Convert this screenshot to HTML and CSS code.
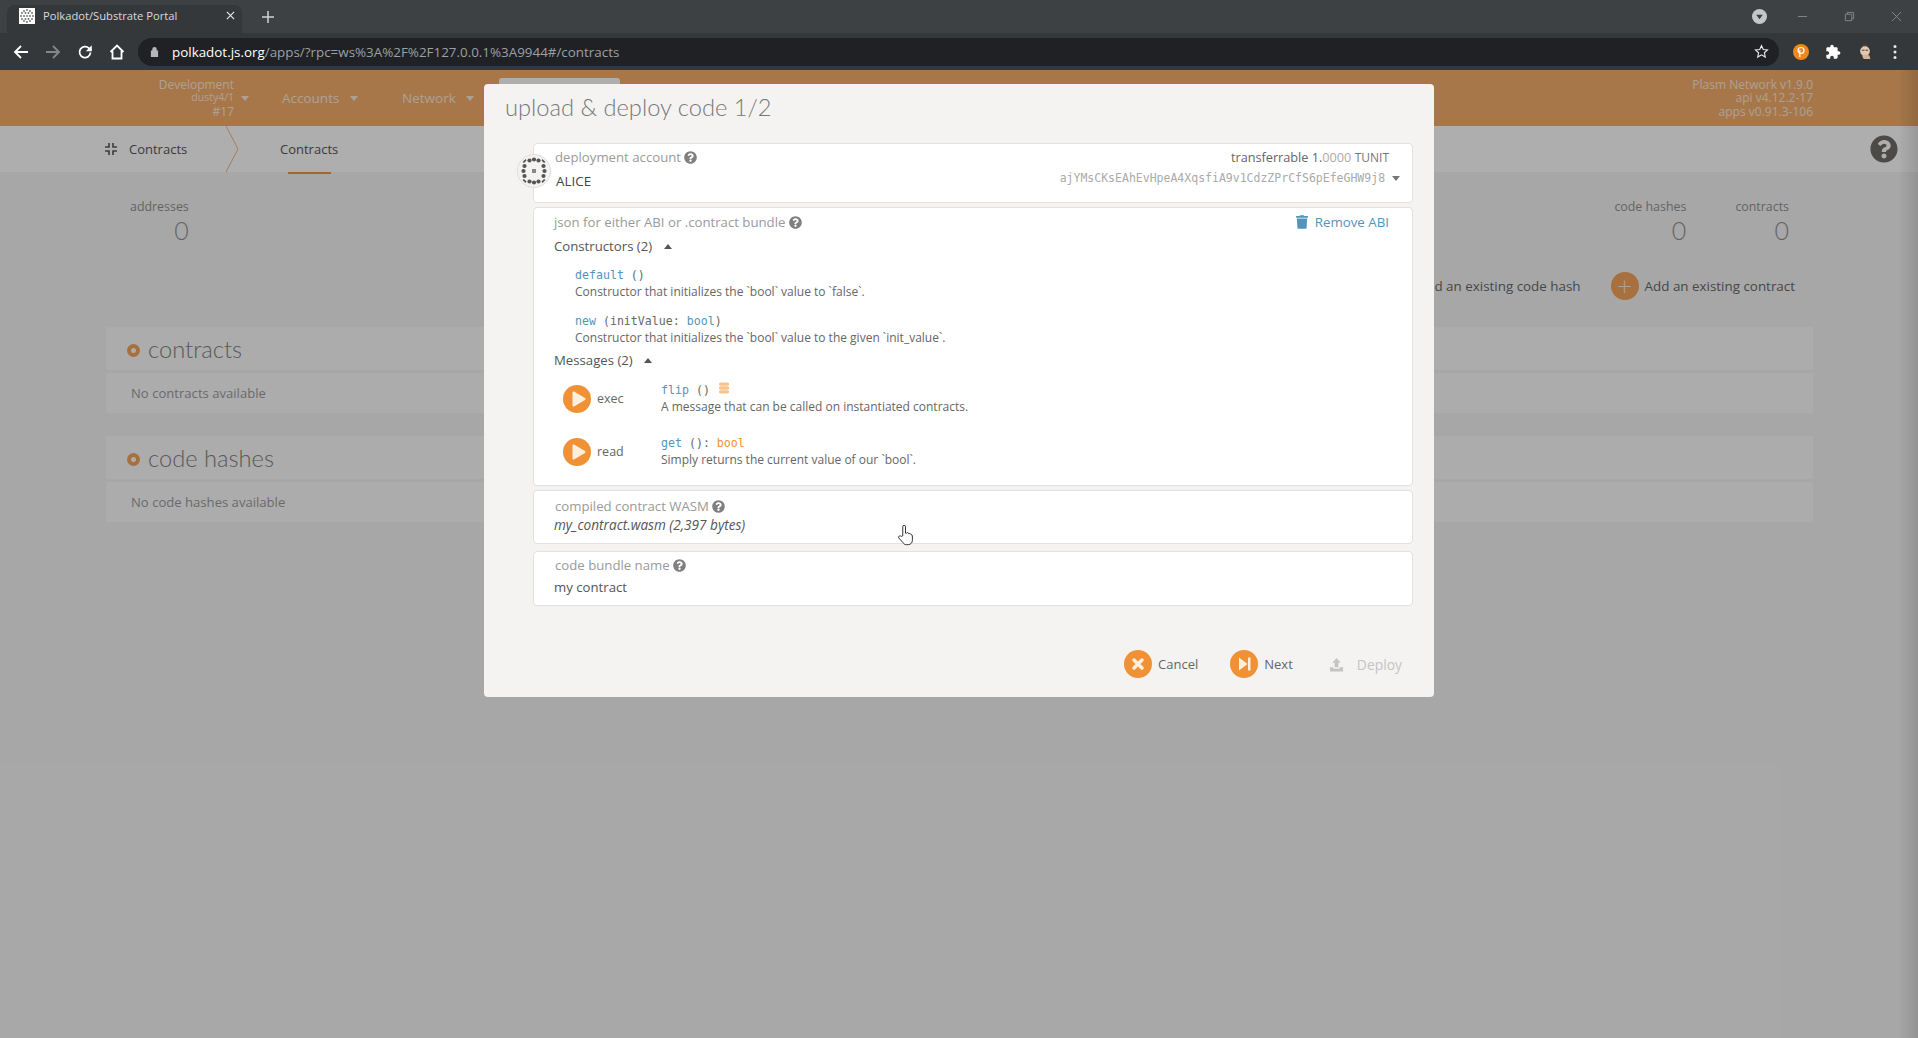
FILE: index.html
```html
<!DOCTYPE html>
<html lang="en">
<head>
    <meta charset="UTF-8">
    <title>Polkadot/Substrate Portal</title>
    <link rel="stylesheet" href="styles.css">
</head>
<body>
<svg class="defs" width="0" height="0">
    <symbol id="help" viewBox="0 0 512 512"><path d="M504 256c0 136.997-111.043 248-248 248S8 392.997 8 256C8 119.083 119.043 8 256 8s248 111.083 248 248zM262.655 90c-54.497 0-89.255 22.957-116.549 63.758-3.536 5.286-2.353 12.415 2.715 16.258l34.699 26.31c5.205 3.947 12.621 3.008 16.665-2.122 17.864-22.658 30.113-35.797 57.303-35.797 20.429 0 45.698 13.148 45.698 32.958 0 14.976-12.363 22.667-32.534 33.976C247.128 238.528 216 254.941 216 296v4c0 6.627 5.373 12 12 12h56c6.627 0 12-5.373 12-12v-1.333c0-28.462 83.186-29.647 83.186-106.667 0-58.002-60.165-102-116.531-102zM256 338c-25.365 0-46 20.635-46 46 0 25.364 20.635 46 46 46s46-20.636 46-46c0-25.365-20.635-46-46-46z"/></symbol>
    <symbol id="play" viewBox="0 0 28 28"><path d="M9.5 7.5a1 1 0 0 1 1.5-.9l11 6.5a1 1 0 0 1 0 1.8l-11 6.5a1 1 0 0 1-1.500-.9z"/></symbol>
</svg>

<!-- browser -->
<div class="tabstrip">
    <div class="tab">
        <svg class="favicon" viewBox="0 0 16 16">
            <rect width="16" height="16" fill="#fff"/>
            <g fill="#666">
                <circle cx="5" cy="3" r=".9"/><circle cx="8" cy="2" r=".9"/><circle cx="11" cy="3" r=".9"/>
                <circle cx="3" cy="5" r=".9"/><circle cx="6.500" cy="5" r=".9"/><circle cx="9.500" cy="5" r=".9"/><circle cx="13" cy="5" r=".9"/>
                <circle cx="2" cy="8" r=".9"/><circle cx="5" cy="8" r=".9"/><circle cx="8" cy="8" r=".9"/><circle cx="11" cy="8" r=".9"/><circle cx="14" cy="8" r=".9"/>
                <circle cx="3" cy="11" r=".9"/><circle cx="6.500" cy="11" r=".9"/><circle cx="9.500" cy="11" r=".9"/><circle cx="13" cy="11" r=".9"/>
                <circle cx="5" cy="13" r=".9"/><circle cx="8" cy="14" r=".9"/><circle cx="11" cy="13" r=".9"/>
            </g>
        </svg>
        <span class="tab-title">Polkadot/Substrate Portal</span>
        <svg class="tab-close" viewBox="0 0 10 10"><path d="M1 1l8 8M9 1l-8 8"/></svg>
    </div>
    <svg class="tab-new" viewBox="0 0 12 12"><path d="M6 0v12M0 6h12"/></svg>
    <div class="window-controls">
        <svg class="tab-search" viewBox="0 0 16 16"><circle cx="8" cy="8" r="8" fill="#c4c7c9"/><path d="M4.500 6h7L8 11z" fill="#3b3f42"/></svg>
        <svg class="win" viewBox="0 0 12 12"><path d="M1 6h10"/></svg>
        <svg class="win" viewBox="0 0 12 12"><path d="M1.500 3.500h7v7h-7zM3.500 3.500v-2h7v7h-2"/></svg>
        <svg class="win" viewBox="0 0 12 12"><path d="M1 1l10 10M11 1L1 11"/></svg>
    </div>
</div>
<div class="toolbar">
    <svg class="tool" viewBox="0 0 16 16"><path d="M15 8H2M8 2L2 8l6 6"/></svg>
    <svg class="tool tool-off" viewBox="0 0 16 16"><path d="M1 8h13M8 2l6 6-6 6"/></svg>
    <svg class="tool" viewBox="0 0 16 16"><path d="M13.500 8.500a5.500 5.500 0 1 1-1.600-4.300L14 6"/><path class="tool-fill" d="M14.800 1.200v6h-6z"/></svg>
    <svg class="tool" viewBox="0 0 16 16"><path d="M1.500 8L8 1.500 14.500 8M3.500 7v7.500h9V7"/></svg>
    <div class="urlbar">
        <svg class="lock" viewBox="0 0 10 12"><path d="M2.500 5V3.500a2.500 2.500 0 0 1 5 0V5H9v7H1V5z"/></svg>
        <span class="url"><b>polkadot.js.org</b>/apps/?rpc=ws%3A%2F%2F127.0.0.1%3A9944#/contracts</span>
        <svg class="star" viewBox="0 0 16 16"><path d="M8 1.800l1.900 4.100 4.500.5-3.300 3 .9 4.500L8 11.600l-4 2.300.9-4.500-3.300-3 4.500-.5z"/></svg>
    </div>
    <div class="ext-icons">
        <svg class="ext" viewBox="0 0 16 16"><circle cx="8" cy="8" r="8" fill="#f0871f"/><circle cx="8" cy="6.500" r="3" fill="none" stroke="#fff" stroke-width="1.200"/><path d="M6.800 6v7" stroke="#fff" stroke-width="1.200"/></svg>
        <svg class="ext" viewBox="0 0 24 24"><path fill="#fff" d="M20.500 11H19V7c0-1.100-.9-2-2-2h-4V3.500C13 2.120 11.880 1 10.500 1S8 2.120 8 3.500V5H4c-1.100 0-1.990.9-1.990 2v3.800H3.500c1.490 0 2.700 1.210 2.700 2.700s-1.210 2.700-2.700 2.700H2V20c0 1.100.9 2 2 2h3.800v-1.500c0-1.490 1.210-2.700 2.700-2.700 1.490 0 2.700 1.210 2.700 2.700V22H17c1.100 0 2-.9 2-2v-4h1.500c1.380 0 2.500-1.120 2.500-2.500S21.880 11 20.500 11z"/></svg>
        <svg class="ext" viewBox="0 0 16 18"><ellipse cx="8" cy="3" rx="3.500" ry="3" fill="#4a4038"/><ellipse cx="8" cy="8" rx="5.500" ry="5.500" fill="#e3c9b0"/><path d="M4.500 7h3M8.500 7h3" stroke="#333"/><path d="M5 12c0 3 1 5 3 5h6l-1-4-3-1z" fill="#d9b28f"/></svg>
        <svg class="ext ext-menu" viewBox="0 0 4 16"><circle cx="2" cy="2.500" r="1.500"/><circle cx="2" cy="8" r="1.500"/><circle cx="2" cy="13.500" r="1.500"/></svg>
    </div>
</div>

<!-- page behind the dialog -->
<div class="page">
    <header class="topnav">
        <div class="chain">
            <div class="chain-name">Development</div>
            <div class="chain-runtime">dusty4/1</div>
            <div class="chain-block">#17</div>
        </div>
        <i class="caret caret-chain"></i>
        <div class="nav-item">Accounts <i class="caret"></i></div>
        <div class="nav-item">Network <i class="caret"></i></div>
        <div class="versions">
            <div>Plasm Network v1.9.0</div>
            <div>api v4.12.2-17</div>
            <div>apps v0.91.3-106</div>
        </div>
    </header>
    <nav class="subnav">
        <svg class="subnav-icon" viewBox="0 0 12 12"><path d="M4 0v4H0M8 0v4h4M4 12V8H0M8 12V8h4"/></svg>
        <span class="subnav-title">Contracts</span>
        <svg class="subnav-chevron" viewBox="0 0 12 46"><path d="M0 0l12 23L0 46"/></svg>
        <span class="subnav-tab">Contracts</span>
        <svg class="subnav-help"><use href="#help"/></svg>
    </nav>
    <main class="content">
        <div class="summary">
            <div class="stat">
                <div class="stat-label">addresses</div>
                <div class="stat-value">0</div>
            </div>
            <div class="stat stat-right">
                <div class="stat-label">code hashes</div>
                <div class="stat-value">0</div>
            </div>
            <div class="stat">
                <div class="stat-label">contracts</div>
                <div class="stat-value">0</div>
            </div>
        </div>
        <div class="actions">
            <span class="action"><span class="action-plus">+</span>Add an existing code hash</span>
            <span class="action"><span class="action-plus">+</span>Add an existing contract</span>
        </div>
        <section class="panel">
            <h2 class="panel-head"><i class="panel-dot"></i>contracts</h2>
            <div class="panel-body">No contracts available</div>
        </section>
        <section class="panel">
            <h2 class="panel-head"><i class="panel-dot"></i>code hashes</h2>
            <div class="panel-body">No code hashes available</div>
        </section>
    </main>
    <div class="dimmer"></div>
    <div class="edge-shade"></div>
    <div class="tab-behind"></div>

    <!-- dialog -->
    <div class="modal">
        <h1 class="modal-title">upload &amp; deploy code 1/2</h1>

        <div class="card card-account">
            <svg class="identicon" viewBox="0 0 34 34">
                <circle cx="17" cy="17" r="16.500" fill="#f4f3f2" stroke="#ddd"/>
                <g fill="#555">
                    <circle cx="12.500" cy="6.500" r="2.100"/><circle cx="17" cy="5.500" r="2.100"/><circle cx="21.500" cy="6.500" r="2.100"/>
                    <circle cx="7.500" cy="12" r="2.100"/><circle cx="26.500" cy="12" r="2.100"/><circle cx="6.500" cy="17" r="2.100"/><circle cx="27.500" cy="17" r="2.100"/>
                    <circle cx="7.500" cy="22" r="2.100"/><circle cx="26.500" cy="22" r="2.100"/>
                    <circle cx="12.500" cy="27.500" r="2.100"/><circle cx="17" cy="28.500" r="2.100"/><circle cx="21.500" cy="27.500" r="2.100"/>
                    <path d="M5.500 8l3-3 1 1.500-2.500 2.500zM28.500 8l-3-3-1 1.500 2.500 2.500zM5.500 26l3 3 1-1.500-2.500-2.500zM28.500 26l-3 3-1-1.500 2.500-2.500z"/>
                    <rect x="15" y="15" width="4" height="4" fill="#888"/>
                </g>
            </svg>
            <div class="account-left">
                <div class="label">deployment account <svg class="help"><use href="#help"/></svg></div>
                <div class="account-name">ALICE</div>
            </div>
            <div class="account-right">
                <div class="balance">transferrable 1.<span class="balance-dec">0000</span> <span class="balance-unit">TUNIT</span></div>
                <div class="address">ajYMsCKsEAhEvHpeA4XqsfiA9v1CdzZPrCfS6pEfeGHW9j8 <i class="caret caret-dark"></i></div>
            </div>
        </div>

        <div class="card card-abi">
            <div class="abi-head">
                <div class="label">json for either ABI or .contract bundle <svg class="help"><use href="#help"/></svg></div>
                <div class="remove-abi">
                    <svg class="trash" viewBox="0 0 448 512"><path d="M432 32H312l-9.400-18.700A24 24 0 0 0 281.100 0H166.800a23.720 23.720 0 0 0-21.400 13.300L136 32H16A16 16 0 0 0 0 48v32a16 16 0 0 0 16 16h416a16 16 0 0 0 16-16V48a16 16 0 0 0-16-16zM53.200 467a48 48 0 0 0 47.900 45h245.800a48 48 0 0 0 47.900-45L416 128H32z"/></svg>
                    Remove ABI
                </div>
            </div>
            <div class="abi-group">Constructors (2) <i class="caret-up"></i></div>
            <div class="ctor">
                <div class="sig"><span class="sig-name">default</span> ()</div>
                <div class="doc">Constructor that initializes the `bool` value to `false`.</div>
            </div>
            <div class="ctor">
                <div class="sig"><span class="sig-name">new</span> (initValue: <span class="sig-name">bool</span>)</div>
                <div class="doc">Constructor that initializes the `bool` value to the given `init_value`.</div>
            </div>
            <div class="abi-group abi-group-msg">Messages (2) <i class="caret-up"></i></div>
            <div class="message">
                <div class="message-btn"><span class="round-btn"><svg class="round-icon"><use href="#play"/></svg></span>exec</div>
                <div>
                    <div class="sig"><span class="sig-name">flip</span> ()
                        <svg class="db" viewBox="0 0 12 12"><rect y="0" width="11" height="3.600" rx="1.600"/><rect y="4.200" width="11" height="3.600" rx="1.600"/><rect y="8.400" width="11" height="3.600" rx="1.600"/></svg>
                    </div>
                    <div class="doc">A message that can be called on instantiated contracts.</div>
                </div>
            </div>
            <div class="message">
                <div class="message-btn"><span class="round-btn"><svg class="round-icon"><use href="#play"/></svg></span>read</div>
                <div>
                    <div class="sig"><span class="sig-name">get</span> (): <span class="sig-ret">bool</span></div>
                    <div class="doc">Simply returns the current value of our `bool`.</div>
                </div>
            </div>
        </div>

        <div class="card card-file">
            <div class="label">compiled contract WASM <svg class="help"><use href="#help"/></svg></div>
            <div class="file-name">my_contract.wasm (2,397 bytes)</div>
        </div>

        <div class="card card-name">
            <div class="label">code bundle name <svg class="help"><use href="#help"/></svg></div>
            <div class="bundle-name">my contract</div>
        </div>

        <div class="modal-actions">
            <span class="btn btn-cancel"><span class="round-btn"><svg class="round-icon" viewBox="0 0 28 28"><path class="x-stroke" d="M10 10l8 8M18 10l-8 8"/></svg></span>Cancel</span>
            <span class="btn"><span class="round-btn"><svg class="round-icon" viewBox="0 0 28 28"><path d="M9 7.500l8.500 6.500L9 20.500zM18 7.500h2.500v13H18z"/></svg></span>Next</span>
            <span class="btn btn-off"><svg class="upload" viewBox="0 0 16 16"><path d="M8 1l4.500 5H10v5H6V6H3.500zM1 11h3.500v1.500h7V11H15v4.500H1z"/></svg>Deploy</span>
        </div>
    </div>

    <svg class="cursor" viewBox="0 0 18 24"><path d="M6 13V3a1.500 1.500 0 0 1 3 0v7l1 .2a1.300 1.300 0 0 1 2.500.3l.2.400a1.300 1.300 0 0 1 2.300.6c.6 0 1.500.5 1.500 1.500v5c0 2.500-2 4.500-4.500 4.500H10c-2 0-3-1-4-2.500L1.500 15c-.7-1.500 1.500-3 3-1.500z"/></svg>
</div>
</body>
</html>
```

FILE: styles.css
```css
*{
    margin:0;
    padding:0;
    box-sizing:border-box;
}
html,body{
    height:100%;
    overflow:hidden;
}
body{
    display:flex;
    flex-direction:column;
    font-family:"Open Sans","Noto Sans",sans-serif;
    font-size:12.5px;
    color:#555;
}
.defs{
    display:block;
    height:0;
}
i{
    display:inline-block;
}

/* browser */
.tabstrip{
    display:flex;
    align-items:center;
    height:33px;
    flex:none;
    background:#3d4144;
}
.tab{
    display:flex;
    align-items:center;
    align-self:flex-end;
    width:235px;
    height:28px;
    margin-left:7px;
    padding:0 0 7px 12px;
    border-radius:8px 8px 0 0;
    background:#35383b;
}
.favicon{
    width:16px;
    height:16px;
}
.tab-title{
    flex:1;
    margin-left:8px;
    font-size:11.2px;
    color:#d8dadb;
    white-space:nowrap;
}
.tab-close{
    width:9px;
    height:9px;
    margin-right:7px;
    fill:none;
    stroke:#e0e0e0;
    stroke-width:1.4;
}
.tab-new{
    width:12px;
    height:12px;
    margin-left:20px;
    fill:none;
    stroke:#d0d2d3;
    stroke-width:1.5;
}
.window-controls{
    display:flex;
    align-items:center;
    margin-left:auto;
}
.tab-search{
    width:15px;
    height:15px;
    margin-right:30px;
}
.win{
    width:11px;
    height:11px;
    margin-right:36px;
    fill:none;
    stroke:#85888a;
    stroke-width:1;
}
.win:last-child{
    margin-right:16px;
}
.toolbar{
    display:flex;
    align-items:center;
    height:37px;
    flex:none;
    padding:0 0 0 13px;
    background:#35383b;
}
.tool{
    width:16px;
    height:16px;
    margin-right:16px;
    fill:none;
    stroke:#fff;
    stroke-width:1.8;
}
.tool-fill{
    fill:#fff;
    stroke:none;
}
.tool-off{
    stroke:#85888a;
}
.urlbar{
    display:flex;
    align-items:center;
    width:1641px;
    height:28px;
    margin-left:-3px;
    padding:0 10px 0 12px;
    border-radius:14px;
    background:#202124;
}
.lock{
    width:9px;
    height:11px;
    fill:#b4b6b8;
}
.url{
    flex:1;
    margin-left:13px;
    font-size:13.4px;
    color:#9aa0a6;
}
.url b{
    font-weight:400;
    color:#fff;
}
.star{
    width:15px;
    height:15px;
    fill:none;
    stroke:#e8eaed;
    stroke-width:1.2;
}
.ext-icons{
    display:flex;
    align-items:center;
    margin-left:14px;
    gap:16px;
}
.ext{
    width:16px;
    height:16px;
}
.ext-menu{
    width:4px;
    margin-left:4px;
    fill:#e8eaed;
}

/* page */
.page{
    position:relative;
    flex:1;
    overflow:hidden;
    background:#f0f0f0;
}
.topnav{
    display:flex;
    align-items:center;
    height:56px;
    padding-left:101px;
    background:#f0ab6b;
    color:#f6e6d6;
    font-size:13.5px;
}
.chain{
    width:133px;
    text-align:right;
    font-size:12px;
    line-height:13.5px;
}
.chain-runtime{
    font-size:10.5px;
}
.caret{
    width:0;
    height:0;
    margin-left:7px;
    border:4.500px solid transparent;
    border-bottom:0;
    border-top:5px solid #f6e6d6;
    vertical-align:2px;
}
.caret-chain{
    margin-left:7px;
}
.caret-dark{
    margin-left:0;
    border-top-color:#777;
    vertical-align:1px;
}
.nav-item{
    width:120px;
    margin-left:33px;
    white-space:nowrap;
}
.nav-item + .nav-item{
    margin-left:0;
}
.versions{
    margin-left:auto;
    margin-right:105px;
    text-align:right;
    font-size:12px;
    line-height:13.500px;
}
.subnav{
    display:flex;
    align-items:center;
    height:46px;
    padding-left:105px;
    background:#f9f9f9;
    color:#555;
    font-size:13px;
}
.subnav-icon{
    width:12px;
    height:12px;
    margin-right:12px;
    fill:none;
    stroke:#555;
    stroke-width:1.6;
}
.subnav-title{
    width:97px;
}
.subnav-chevron{
    width:12px;
    height:46px;
    margin-right:42px;
    fill:none;
    stroke:#e6b58a;
}
.subnav-tab{
    position:relative;
    align-self:stretch;
    line-height:46px;
}
.subnav-tab::after{
    content:"";
    position:absolute;
    left:8px;
    right:7px;
    bottom:-2px;
    height:2px;
    background:#f19135;
}
.subnav-help{
    width:28px;
    height:28px;
    margin-left:auto;
    margin-right:20px;
    fill:#6d6a66;
}
.content{
    padding:26px 105px 0 106px;
}
.summary{
    display:flex;
    padding:0 24px 0 24px;
    gap:49px;
}
.stat{
    text-align:right;
    font-size:12.4px;
    color:#8f8f8f;
}
.stat-right{
    margin-left:auto;
}
.stat-label{
    line-height:18px;
}
.stat-value{
    font-family:"Lato","Open Sans",sans-serif;
    font-size:25px;
    font-weight:300;
    line-height:28px;
    color:#8f8f8f;
}
.actions{
    display:flex;
    justify-content:flex-end;
    align-items:center;
    gap:30px;
    margin-top:28px;
    padding-right:18px;
    color:#666;
    font-size:13.4px;
}
.action{
    display:flex;
    align-items:center;
}
.action-plus{
    width:28px;
    height:28px;
    margin-right:6px;
    border-radius:50%;
    background:#f0a15a;
    color:#f6e6d6;
    font-family:"Lato","Open Sans",sans-serif;
    font-size:26px;
    font-weight:300;
    line-height:26px;
    text-align:center;
}
.panel{
    margin-top:27px;
}
.panel + .panel{
    margin-top:23px;
}
.panel-head{
    display:flex;
    align-items:center;
    height:43px;
    padding-left:21px;
    background:#f7f7f7;
    font-family:"Lato","Open Sans",sans-serif;
    font-size:23.7px;
    font-weight:300;
    color:#808080;
}
.panel-dot{
    width:13px;
    height:13px;
    margin-right:8px;
    margin-top:3px;
    border:4px solid #f0a15a;
    border-radius:50%;
    background:#f7f7f7;
}
.panel-body{
    height:40px;
    margin-top:3px;
    padding-left:25px;
    background:#f7f7f7;
    font-size:13.1px;
    line-height:40px;
    color:#999;
}

/* overlay */
.dimmer{
    position:absolute;
    inset:0;
    background:rgba(0,0,0,.3);
}
.edge-shade{
    position:absolute;
    top:0;
    right:0;
    bottom:0;
    width:18px;
    background:linear-gradient(to right,rgba(0,0,0,.02),rgba(0,0,0,.12));
}
.tab-behind{
    position:absolute;
    left:499px;
    top:8px;
    width:121px;
    height:8px;
    border-radius:3px 3px 0 0;
    background:#aeaeae;
}
.modal{
    position:absolute;
    left:484px;
    top:14px;
    width:950px;
    height:613px;
    padding:0 21px 0 49px;
    border-radius:4px;
    background:#f4f3f2;
}
.modal-title{
    height:59px;
    margin-left:-28px;
    font-family:"Lato","Open Sans",sans-serif;
    font-size:23.7px;
    font-weight:300;
    line-height:47px;
    color:#787878;
    white-space:nowrap;
}
.card{
    border:1px solid #e2e1df;
    border-radius:4px;
    background:#fff;
}
.label{
    font-size:13.2px;
    color:#9a9a9a;
    white-space:nowrap;
}
.help{
    width:13px;
    height:13px;
    vertical-align:-2px;
    fill:#808080;
}
.card-account{
    position:relative;
    display:flex;
    justify-content:space-between;
    height:60px;
    padding:4px 12px 0 21px;
}
.identicon{
    position:absolute;
    left:-17px;
    top:10px;
    width:34px;
    height:34px;
}
.account-name{
    margin-top:6px;
    margin-left:1px;
    font-size:13.4px;
    color:#444;
}
.account-right{
    text-align:right;
}
.balance{
    padding-right:11px;
    font-size:12.7px;
    color:#666;
}
.balance-dec{
    color:#aaa;
}
.balance-unit{
    color:#777;
    font-size:12px;
}
.address{
    margin-top:5px;
    font-family:"DejaVu Sans Mono","Liberation Mono",monospace;
    font-size:11.500px;
    color:#aaa;
}
.card-abi{
    height:279px;
    margin-top:4px;
    padding:5px 23px 0 20px;
}
.abi-head{
    display:flex;
    justify-content:space-between;
}
.remove-abi{
    display:flex;
    align-items:center;
    color:#5294ba;
    font-size:13.3px;
}
.trash{
    width:12px;
    height:14px;
    margin-right:7px;
    fill:#5294ba;
}
.abi-group{
    margin-top:6px;
    color:#555;
    font-size:13.2px;
    line-height:18px;
}
.abi-group-msg{
    margin-top:5px;
}
.caret-up{
    width:0;
    height:0;
    margin-left:8px;
    border:4.500px solid transparent;
    border-top:0;
    border-bottom:5px solid #555;
    vertical-align:2px;
}
.ctor{
    margin:12px 0 0 21px;
    line-height:16.500px;
}
.ctor + .ctor{
    margin-top:13px;
}
.sig{
    font-family:"DejaVu Sans Mono","Liberation Mono",monospace;
    font-size:11.600px;
    color:#666;
    line-height:16.500px;
}
.sig-name{
    color:#5294ba;
}
.sig-ret{
    color:#f19135;
}
.doc{
    font-size:12px;
    color:#666;
    line-height:16.500px;
}
.message{
    display:flex;
    align-items:center;
    height:53px;
}
.abi-group + .message{
    margin-top:3px;
}
.message-btn{
    display:flex;
    align-items:center;
    width:107px;
    padding-left:9px;
    color:#666;
    font-size:12.500px;
}
.round-btn{
    display:flex;
    align-items:center;
    justify-content:center;
    width:28px;
    height:28px;
    margin-right:6px;
    border-radius:50%;
    background:#f19135;
}
.round-icon{
    width:28px;
    height:28px;
    fill:#fdeedd;
}
.x-stroke{
    fill:none;
    stroke:#fdeedd;
    stroke-width:3.500;
    stroke-linecap:round;
}
.db{
    width:11px;
    height:12px;
    margin-left:2px;
    vertical-align:0;
    fill:#f8c48d;
}
.card-file{
    height:54px;
    margin-top:4px;
    padding:6px 20px 0 21px;
}
.file-name{
    margin-top:0;
    margin-left:-1px;
    font-size:13.6px;
    font-style:italic;
    color:#555;
}
.card-name{
    height:55px;
    margin-top:7px;
    padding:4px 20px 0 21px;
}
.bundle-name{
    margin-top:4px;
    margin-left:-1px;
    font-size:13.2px;
    color:#555;
}
.modal-actions{
    display:flex;
    justify-content:flex-end;
    align-items:center;
    gap:26px;
    margin-top:44px;
    padding-right:11px;
}
.btn{
    display:flex;
    align-items:center;
    color:#666;
    font-size:13px;
}
.btn-cancel{
    margin-right:6px;
}
.btn-off{
    margin-left:10px;
    font-size:13.9px;
    color:#c4c4c4;
}
.upload{
    width:15px;
    height:15px;
    margin-right:13px;
    fill:#c4c4c4;
}
.cursor{
    position:absolute;
    left:897px;
    top:454px;
    width:17px;
    height:22px;
    fill:#fff;
    stroke:#222;
}
```
